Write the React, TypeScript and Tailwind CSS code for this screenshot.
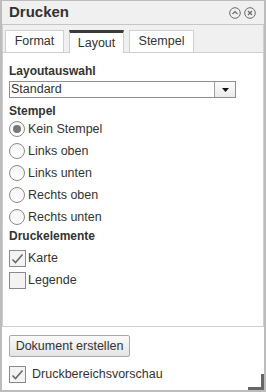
import { useState } from 'react'

const stempelOptions = ['Kein Stempel', 'Links oben', 'Links unten', 'Rechts oben', 'Rechts unten']
const tabs = [
  { label: 'Format', cls: 'w-[59px] ml-[2px]' },
  { label: 'Layout', cls: 'w-[55px] ml-[5px]' },
  { label: 'Stempel', cls: 'w-[65px] ml-[5px]' },
]

function Radio({ checked }: { checked: boolean }) {
  return (
    <span className="w-4 h-4 rounded-full border border-[#8a8a8a] bg-gradient-to-b from-[#f4f4f4] to-[#ffffff] flex items-center justify-center flex-shrink-0">
      {checked && <span className="w-2 h-2 rounded-full bg-[#777]" />}
    </span>
  )
}

function Checkbox({ checked }: { checked: boolean }) {
  return (
    <span className="w-[17px] h-[17px] border border-[#8a8a8a] bg-[#f3f3f3] flex items-center justify-center flex-shrink-0">
      {checked && (
        <svg width="13" height="11" viewBox="0 0 13 11" fill="none">
          <path d="M1.5 6.5 L4.5 9.5 L11.5 1.5" stroke="#6a6a6a" strokeWidth="1.6" />
        </svg>
      )}
    </span>
  )
}

export default function App() {
  const [stempel, setStempel] = useState('Kein Stempel')

  return (
    <div
      className="w-[266px] h-[392px] bg-white border-2 border-t border-[#bcbcbc] flex flex-col text-[#333] overflow-hidden relative"
      style={{ fontFamily: '"Liberation Sans", Arial, sans-serif' }}
    >
      {/* Title */}
      <div className="h-[24px] flex-shrink-0 bg-[#f0f0f0] border-b border-[#c6c6c6] flex items-center justify-between pl-[7px] pr-[8px]">
        <span className="text-[15px] font-bold text-[#333]">Drucken</span>
        <div className="flex items-center gap-[3px]">
          <svg width="12" height="12" viewBox="0 0 12 12" fill="none">
            <circle cx="6" cy="6" r="5.3" stroke="#6a6a6a" strokeWidth="1" />
            <path d="M3.5 7 L6 4.5 L8.5 7" stroke="#6a6a6a" strokeWidth="1.2" />
          </svg>
          <svg width="12" height="12" viewBox="0 0 12 12" fill="none">
            <circle cx="6" cy="6" r="5.3" stroke="#6a6a6a" strokeWidth="1" />
            <path d="M4 4 L8 8 M8 4 L4 8" stroke="#6a6a6a" strokeWidth="1.2" />
          </svg>
        </div>
      </div>

      {/* Tab strip */}
      <div className="h-[27px] flex-shrink-0 bg-[#f0f0f0] flex items-end border-l border-r border-[#d0d0d0]">
        {tabs.map((t) => (
          <div
            key={t.label}
            className={`${t.cls} flex items-center justify-center text-[12.5px] bg-white border-l border-r ${
              t.label === 'Layout'
                ? 'h-[23px] border-t-[3px] border-t-[#3a3a3a] border-[#cfcfcf] -mb-px relative z-10'
                : 'h-[22px] border-t border-[#cfcfcf]'
            }`}
          >
            {t.label}
          </div>
        ))}
      </div>

      {/* Panel */}
      <div className="h-[275px] flex-shrink-0 border border-[#cfcfcf] flex flex-col px-[6px]">
        <div className="mt-[10px] h-[16px] leading-[16px] text-[12px] font-bold">Layoutauswahl</div>
        <div className="mt-[2px] h-[17px] w-[227px] border border-[#909090] flex">
          <div className="flex-1 text-[12.5px] leading-[15px] pl-[1px]">Standard</div>
          <div className="w-[21px] border-l border-[#a0a0a0] bg-gradient-to-b from-[#fbfbfb] to-[#ebebeb] flex items-center justify-center">
            <svg width="7" height="4" viewBox="0 0 7 4">
              <path d="M0 0 H7 L3.5 4 Z" fill="#111" />
            </svg>
          </div>
        </div>
        <div className="mt-[5px] h-[16px] leading-[16px] text-[12px] font-bold">Stempel</div>
        <div className="flex flex-col mt-[-1px]">
          {stempelOptions.map((o) => (
            <div
              key={o}
              className="h-[22px] flex items-center gap-[3px] text-[12.5px] cursor-default"
              onClick={() => setStempel(o)}
            >
              <Radio checked={stempel === o} />
              <span>{o}</span>
            </div>
          ))}
        </div>
        <div className="h-[16px] leading-[16px] text-[12px] font-bold">Druckelemente</div>
        <div className="flex flex-col mt-[3px]">
          <div className="h-[22px] flex items-center gap-[2px] text-[12.5px]">
            <Checkbox checked />
            <span>Karte</span>
          </div>
          <div className="h-[22px] flex items-center gap-[2px] text-[12.5px]">
            <Checkbox checked={false} />
            <span>Legende</span>
          </div>
        </div>
      </div>

      {/* Footer */}
      <div className="flex-1 flex flex-col px-[7px]">
        <button className="mt-[8px] h-[22px] w-[121px] border border-[#a8a8a8] rounded-[2px] bg-gradient-to-b from-[#fafafa] to-[#e4e4e4] text-[12.5px] text-[#333] flex items-center justify-center">
          Dokument erstellen
        </button>
        <div className="mt-[7px] h-[20px] flex items-center gap-[6px] text-[12.5px]">
          <Checkbox checked />
          <span>Druckbereichsvorschau</span>
        </div>
      </div>

      {/* Resize grip */}
      <div className="absolute right-0 bottom-0 w-[16px] h-[16px] border-r-[3px] border-b-[3px] border-[#666]" />
    </div>
  )
}
